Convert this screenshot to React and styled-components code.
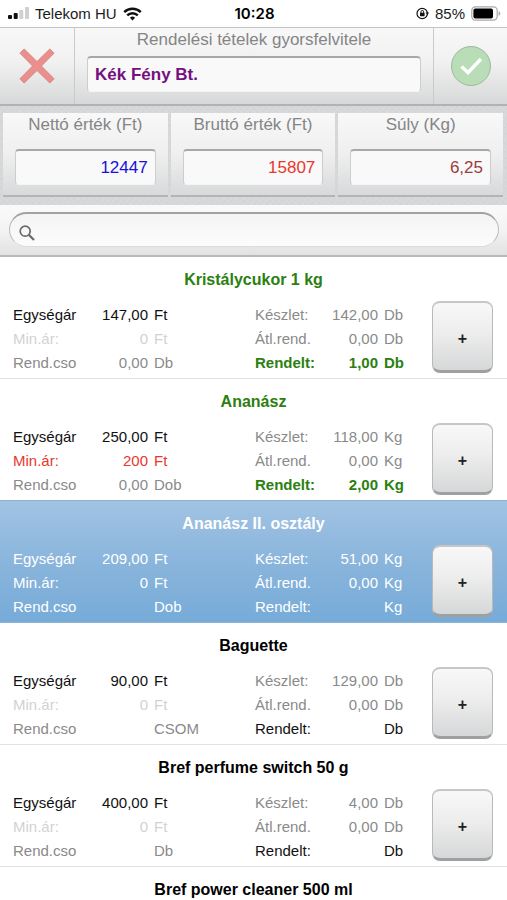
import React from 'react';
import styled, { createGlobalStyle, css } from 'styled-components';

const GlobalStyle = createGlobalStyle`
  * {
    box-sizing: border-box;
  }
  body {
    margin: 0;
    background: white;
    font-family: "Liberation Sans", Arial, Helvetica, sans-serif;
  }
`

const Page = styled.div`
  display: flex;
  flex-direction: column;
  height: 100vh;
  overflow: hidden;
`

const StatusBar = styled.div`
  display: grid;
  grid-template-columns: 1fr auto 1fr;
  align-items: center;
  flex: none;
  height: 27px;
  padding: 0 6px 0 8px;
  font-size: 15px;
  line-height: 27px;
  color: #1c1c1c;
`

const StatusGroup = styled.div`
  display: flex;
  align-items: center;
  gap: 6px;
  justify-content: ${({ $end }) => ($end ? 'flex-end' : 'flex-start')};
`

const Clock = styled.div`
  font-family: Inter, sans-serif;
  font-weight: 600;
  color: black;
`

const Header = styled.header`
  display: grid;
  grid-template-columns: 74px 1fr 73px;
  flex: none;
  border-top: 1px solid #c4c4c4;
  border-bottom: 2px solid #b0b3b5;
  background: linear-gradient(#f8f8f8, #f1f1f1 45%, #d7d8d9);
`

const HeaderButton = styled.button`
  display: flex;
  align-items: center;
  justify-content: center;
  padding: 0;
  border: 0;
  background: none;
`

const HeaderMain = styled.div`
  display: flex;
  flex-direction: column;
  gap: 6px;
  padding: 2px 12px 12px;
  border-left: 1px solid #c9caca;
  border-right: 1px solid #c9caca;
`

const FieldLabel = styled.label`
  font-size: 17px;
  line-height: 20px;
  color: #858585;
  text-align: center;
  white-space: nowrap;
`

const Field = styled.input`
  width: 100%;
  min-width: 0;
  height: 36px;
  padding: 0 7px;
  border: 1px solid #cdcdcd;
  border-top: 2px solid #a8a8a8;
  border-bottom-color: #f4f4f4;
  border-radius: 4px;
  outline: none;
  background: #f9f9f9;
  font-family: inherit;
  font-size: 17px;
  font-weight: ${({ $bold }) => ($bold ? 'bold' : 'normal')};
  color: ${({ $color }) => $color};
  text-align: ${({ $align }) => $align || 'left'};
`

const Totals = styled.section`
  display: grid;
  grid-template-columns: repeat(3, 1fr);
  gap: 3px;
  flex: none;
  padding: 7px 4px 8px 3px;
  background:
    repeating-linear-gradient(37deg, transparent 0 3px, rgba(255, 255, 255, .08) 3px 4px),
    repeating-linear-gradient(-52deg, transparent 0 4px, rgba(120, 125, 130, .04) 4px 5px),
    #d5d7d8;
`

const TotalCard = styled.div`
  display: flex;
  flex-direction: column;
  gap: 14px;
  padding: 2px 12px 10px;
  border-bottom: 2px solid #b2b4b5;
  background: linear-gradient(#f8f8f8, #efefef 50%, #d8d9da);
`

const SearchBar = styled.form`
  display: flex;
  align-items: center;
  flex: none;
  padding: 7px 8px 8px 9px;
  border-bottom: 2px solid #b9b9b9;
  background: linear-gradient(#fafafa, #f3f3f3 50%, #e2e2e2);
`

const SearchPill = styled.label`
  display: flex;
  align-items: center;
  gap: 8px;
  flex: 1;
  height: 35px;
  padding: 6px 16px 0 9px;
  border: 1px solid #bdbdbd;
  border-top: 2px solid #a2a2a2;
  border-bottom-color: #dcdcdc;
  border-radius: 18px;
  background: linear-gradient(#f4f4f4, #fcfcfc);
`

const SearchInput = styled.input`
  flex: 1;
  min-width: 0;
  border: 0;
  outline: none;
  background: none;
  font-family: inherit;
  font-size: 17px;
`

const List = styled.ul`
  flex: 1;
  min-height: 0;
  margin: 0;
  padding: 0;
  overflow-y: auto;
  scrollbar-width: none;
  list-style: none;
`

const Item = styled.li`
  display: flex;
  flex-direction: column;
  gap: 9px;
  height: 122px;
  padding-top: 11px;
  border-bottom: 1px solid #e2e2e2;
  ${({ $selected }) => $selected && css`
    border-bottom-color: #8fb4d4;
    background: linear-gradient(#a1c3e3, #8ab5dc 50%, #76abd8);
    box-shadow: 0 -1px 0 #93b1cb;
  `}
`

const ItemTitle = styled.h2`
  margin: 0;
  font-size: 16px;
  line-height: 24px;
  text-align: center;
  color: ${({ $color }) => $color};
`

const ItemBody = styled.div`
  display: grid;
  grid-template-columns: 1fr 169px 61px;
  gap: 8px;
  padding: 0 14px 0 13px;
`

const Fields = styled.div`
  padding-top: 2px;
  max-width: 181px;
`

const FieldRow = styled.div`
  display: grid;
  grid-template-columns: 64px 1fr 46px;
  font-size: 15px;
  line-height: 24px;
  white-space: nowrap;
  color: ${({ $color }) => $color};
  font-weight: ${({ $bold }) => ($bold ? 'bold' : 'normal')};
`

const Amount = styled.span`
  text-align: right;
`

const Unit = styled.span`
  padding-left: 6px;
`

const AddButton = styled.button`
  height: 72px;
  padding: 4px 0 0;
  border: 1px solid #b9b9b9;
  border-top: 2px solid #c6c6c6;
  border-bottom: 3px solid #a0a0a0;
  border-radius: 8px;
  background: linear-gradient(#f8f8f8, #ededed 45%, #d6d7d8);
  font-family: inherit;
  font-size: 16px;
  font-weight: bold;
  line-height: 24px;
  color: #222;
`

const BLACK = '#111';
const GRAY = '#8a8a8a';
const FAINT = '#d2d2d2';
const GREEN = '#2b8010';
const RED = '#e8372c';

const totals = [
  { id: 'net', label: 'Nettó érték (Ft)', value: '12447', color: '#1a10d8' },
  { id: 'gross', label: 'Bruttó érték (Ft)', value: '15807', color: '#e8372c' },
  { id: 'weight', label: 'Súly (Kg)', value: '6,25', color: '#9c3c40' },
];

// each row is [label, amount, unit, color, bold]
const items = [
  {
    title: 'Kristálycukor 1 kg',
    color: GREEN,
    left: [['Egységár', '147,00', 'Ft', BLACK], ['Min.ár:', '0', 'Ft', FAINT], ['Rend.cso', '0,00', 'Db', GRAY]],
    right: [['Készlet:', '142,00', 'Db', GRAY], ['Átl.rend.', '0,00', 'Db', GRAY], ['Rendelt:', '1,00', 'Db', GREEN, true]],
  },
  {
    title: 'Ananász',
    color: GREEN,
    left: [['Egységár', '250,00', 'Ft', BLACK], ['Min.ár:', '200', 'Ft', RED], ['Rend.cso', '0,00', 'Dob', GRAY]],
    right: [['Készlet:', '118,00', 'Kg', GRAY], ['Átl.rend.', '0,00', 'Kg', GRAY], ['Rendelt:', '2,00', 'Kg', GREEN, true]],
  },
  {
    title: 'Ananász II. osztály',
    color: 'white',
    selected: true,
    left: [['Egységár', '209,00', 'Ft', 'white'], ['Min.ár:', '0', 'Ft', 'white'], ['Rend.cso', '', 'Dob', 'white']],
    right: [['Készlet:', '51,00', 'Kg', 'white'], ['Átl.rend.', '0,00', 'Kg', 'white'], ['Rendelt:', '', 'Kg', 'white']],
  },
  {
    title: 'Baguette',
    color: 'black',
    left: [['Egységár', '90,00', 'Ft', BLACK], ['Min.ár:', '0', 'Ft', FAINT], ['Rend.cso', '', 'CSOM', GRAY]],
    right: [['Készlet:', '129,00', 'Db', GRAY], ['Átl.rend.', '0,00', 'Db', GRAY], ['Rendelt:', '', 'Db', BLACK]],
  },
  {
    title: 'Bref perfume switch 50 g',
    color: 'black',
    left: [['Egységár', '400,00', 'Ft', BLACK], ['Min.ár:', '0', 'Ft', FAINT], ['Rend.cso', '', 'Db', GRAY]],
    right: [['Készlet:', '4,00', 'Db', GRAY], ['Átl.rend.', '0,00', 'Db', GRAY], ['Rendelt:', '', 'Db', BLACK]],
  },
  { title: 'Bref power cleaner 500 ml', color: 'black' },
];

const SignalIcon = () => (
  <svg width="21" height="13" viewBox="0 0 21 13">
    <rect x="0" y="8" width="4" height="4" rx="1" fill="#111" />
    <rect x="5.7" y="6" width="4" height="6" rx="1" fill="#111" />
    <rect x="11.3" y="3" width="4" height="9" rx="1" fill="#d0d0d0" />
    <rect x="17" y="0" width="4" height="12" rx="1" fill="#d0d0d0" />
  </svg>
);

const WifiIcon = () => (
  <svg width="19" height="14" viewBox="0 0 19 14" fill="none" stroke="#111" strokeWidth="2.4">
    <path d="M1.2 5.2a11.8 11.8 0 0 1 16.6 0" />
    <path d="M4.2 8.4a7.5 7.5 0 0 1 10.6 0" />
    <path d="M6.9 10.7a3.8 3.8 0 0 1 5.2 0L9.5 13.4z" fill="#111" stroke="none" />
  </svg>
);

const RotationLockIcon = () => (
  <svg width="13" height="13" viewBox="0 0 13 13" fill="none" stroke="#111">
    <circle cx="6.2" cy="6.5" r="5.2" strokeWidth="1.2" />
    <path d="M9.6 5.4H13l-1.6 2.6z" fill="#111" stroke="none" />
    <rect x="4" y="5.8" width="4.6" height="3.4" rx=".6" fill="#111" stroke="none" />
    <path d="M4.9 6V4.9a1.4 1.4 0 0 1 2.8 0V6" strokeWidth="1" />
  </svg>
);

const BatteryIcon = () => (
  <svg width="30" height="15" viewBox="0 0 30 15">
    <rect x=".8" y=".8" width="25.4" height="13.4" rx="3.6" fill="none" stroke="#a8a8a8" strokeWidth="1.2" />
    <rect x="2.4" y="2.4" width="19.6" height="10.2" rx="2" fill="#000" />
    <path d="M27.6 5.2c2.2.6 2.2 4 0 4.6z" fill="#a8a8a8" />
  </svg>
);

const CrossIcon = () => (
  <svg width="36" height="36" viewBox="0 0 36 36">
    <path
      d="M5.2 1 18 13.6 30.8 1 35 5.2 22.4 18 35 30.8 30.8 35 18 22.4 5.2 35 1 30.8 13.6 18 1 5.2z"
      fill="#ea8f8c"
      stroke="#d98582"
      strokeLinejoin="round"
    />
  </svg>
);

const CheckIcon = () => (
  <svg width="42" height="42" viewBox="0 0 42 42">
    <circle cx="21" cy="21" r="19.5" fill="#b8ddb7" stroke="#9dbb9d" />
    <path d="M11.5 21.5l6.5 6L31 14" fill="none" stroke="white" strokeWidth="3.4" />
  </svg>
);

const SearchIcon = () => (
  <svg width="16" height="16" viewBox="0 0 16 16" fill="none" stroke="#6b6b6b">
    <circle cx="6.2" cy="6.2" r="5" strokeWidth="1.7" />
    <path d="M9.8 9.8 15 15" strokeWidth="2.3" />
  </svg>
);

const FieldList = ({ rows }) => (
  <Fields>
    {rows.map(([name, amount, unit, color, bold]) => (
      <FieldRow key={name} $color={color} $bold={bold}>
        <span>{name}</span>
        <Amount>{amount}</Amount>
        <Unit>{unit}</Unit>
      </FieldRow>
    ))}
  </Fields>
);

const OrderItem = ({ item }) => (
  <Item $selected={item.selected}>
    <ItemTitle $color={item.color}>{item.title}</ItemTitle>
    {item.left ? (
      <ItemBody>
        <FieldList rows={item.left} />
        <FieldList rows={item.right} />
        <AddButton type="button">+</AddButton>
      </ItemBody>
    ) : null}
  </Item>
);

const App = () => (
  <Page>
    <GlobalStyle />
    <StatusBar>
      <StatusGroup>
        <SignalIcon />
        <span>Telekom HU</span>
        <WifiIcon />
      </StatusGroup>
      <Clock>10:28</Clock>
      <StatusGroup $end>
        <RotationLockIcon />
        <span>85%</span>
        <BatteryIcon />
      </StatusGroup>
    </StatusBar>
    <Header>
      <HeaderButton type="button" aria-label="Mégse">
        <CrossIcon />
      </HeaderButton>
      <HeaderMain>
        <FieldLabel htmlFor="partner">Rendelési tételek gyorsfelvitele</FieldLabel>
        <Field id="partner" defaultValue="Kék Fény Bt." $color="#75107f" $bold />
      </HeaderMain>
      <HeaderButton type="button" aria-label="Rendben">
        <CheckIcon />
      </HeaderButton>
    </Header>
    <Totals>
      {totals.map((total) => (
        <TotalCard key={total.id}>
          <FieldLabel htmlFor={total.id}>{total.label}</FieldLabel>
          <Field id={total.id} value={total.value} readOnly $color={total.color} $align="right" />
        </TotalCard>
      ))}
    </Totals>
    <SearchBar>
      <SearchPill>
        <SearchIcon />
        <SearchInput type="text" aria-label="Keresés" />
      </SearchPill>
    </SearchBar>
    <List>
      {items.map((item) => <OrderItem item={item} key={item.title} />)}
    </List>
  </Page>
);

export default App;
